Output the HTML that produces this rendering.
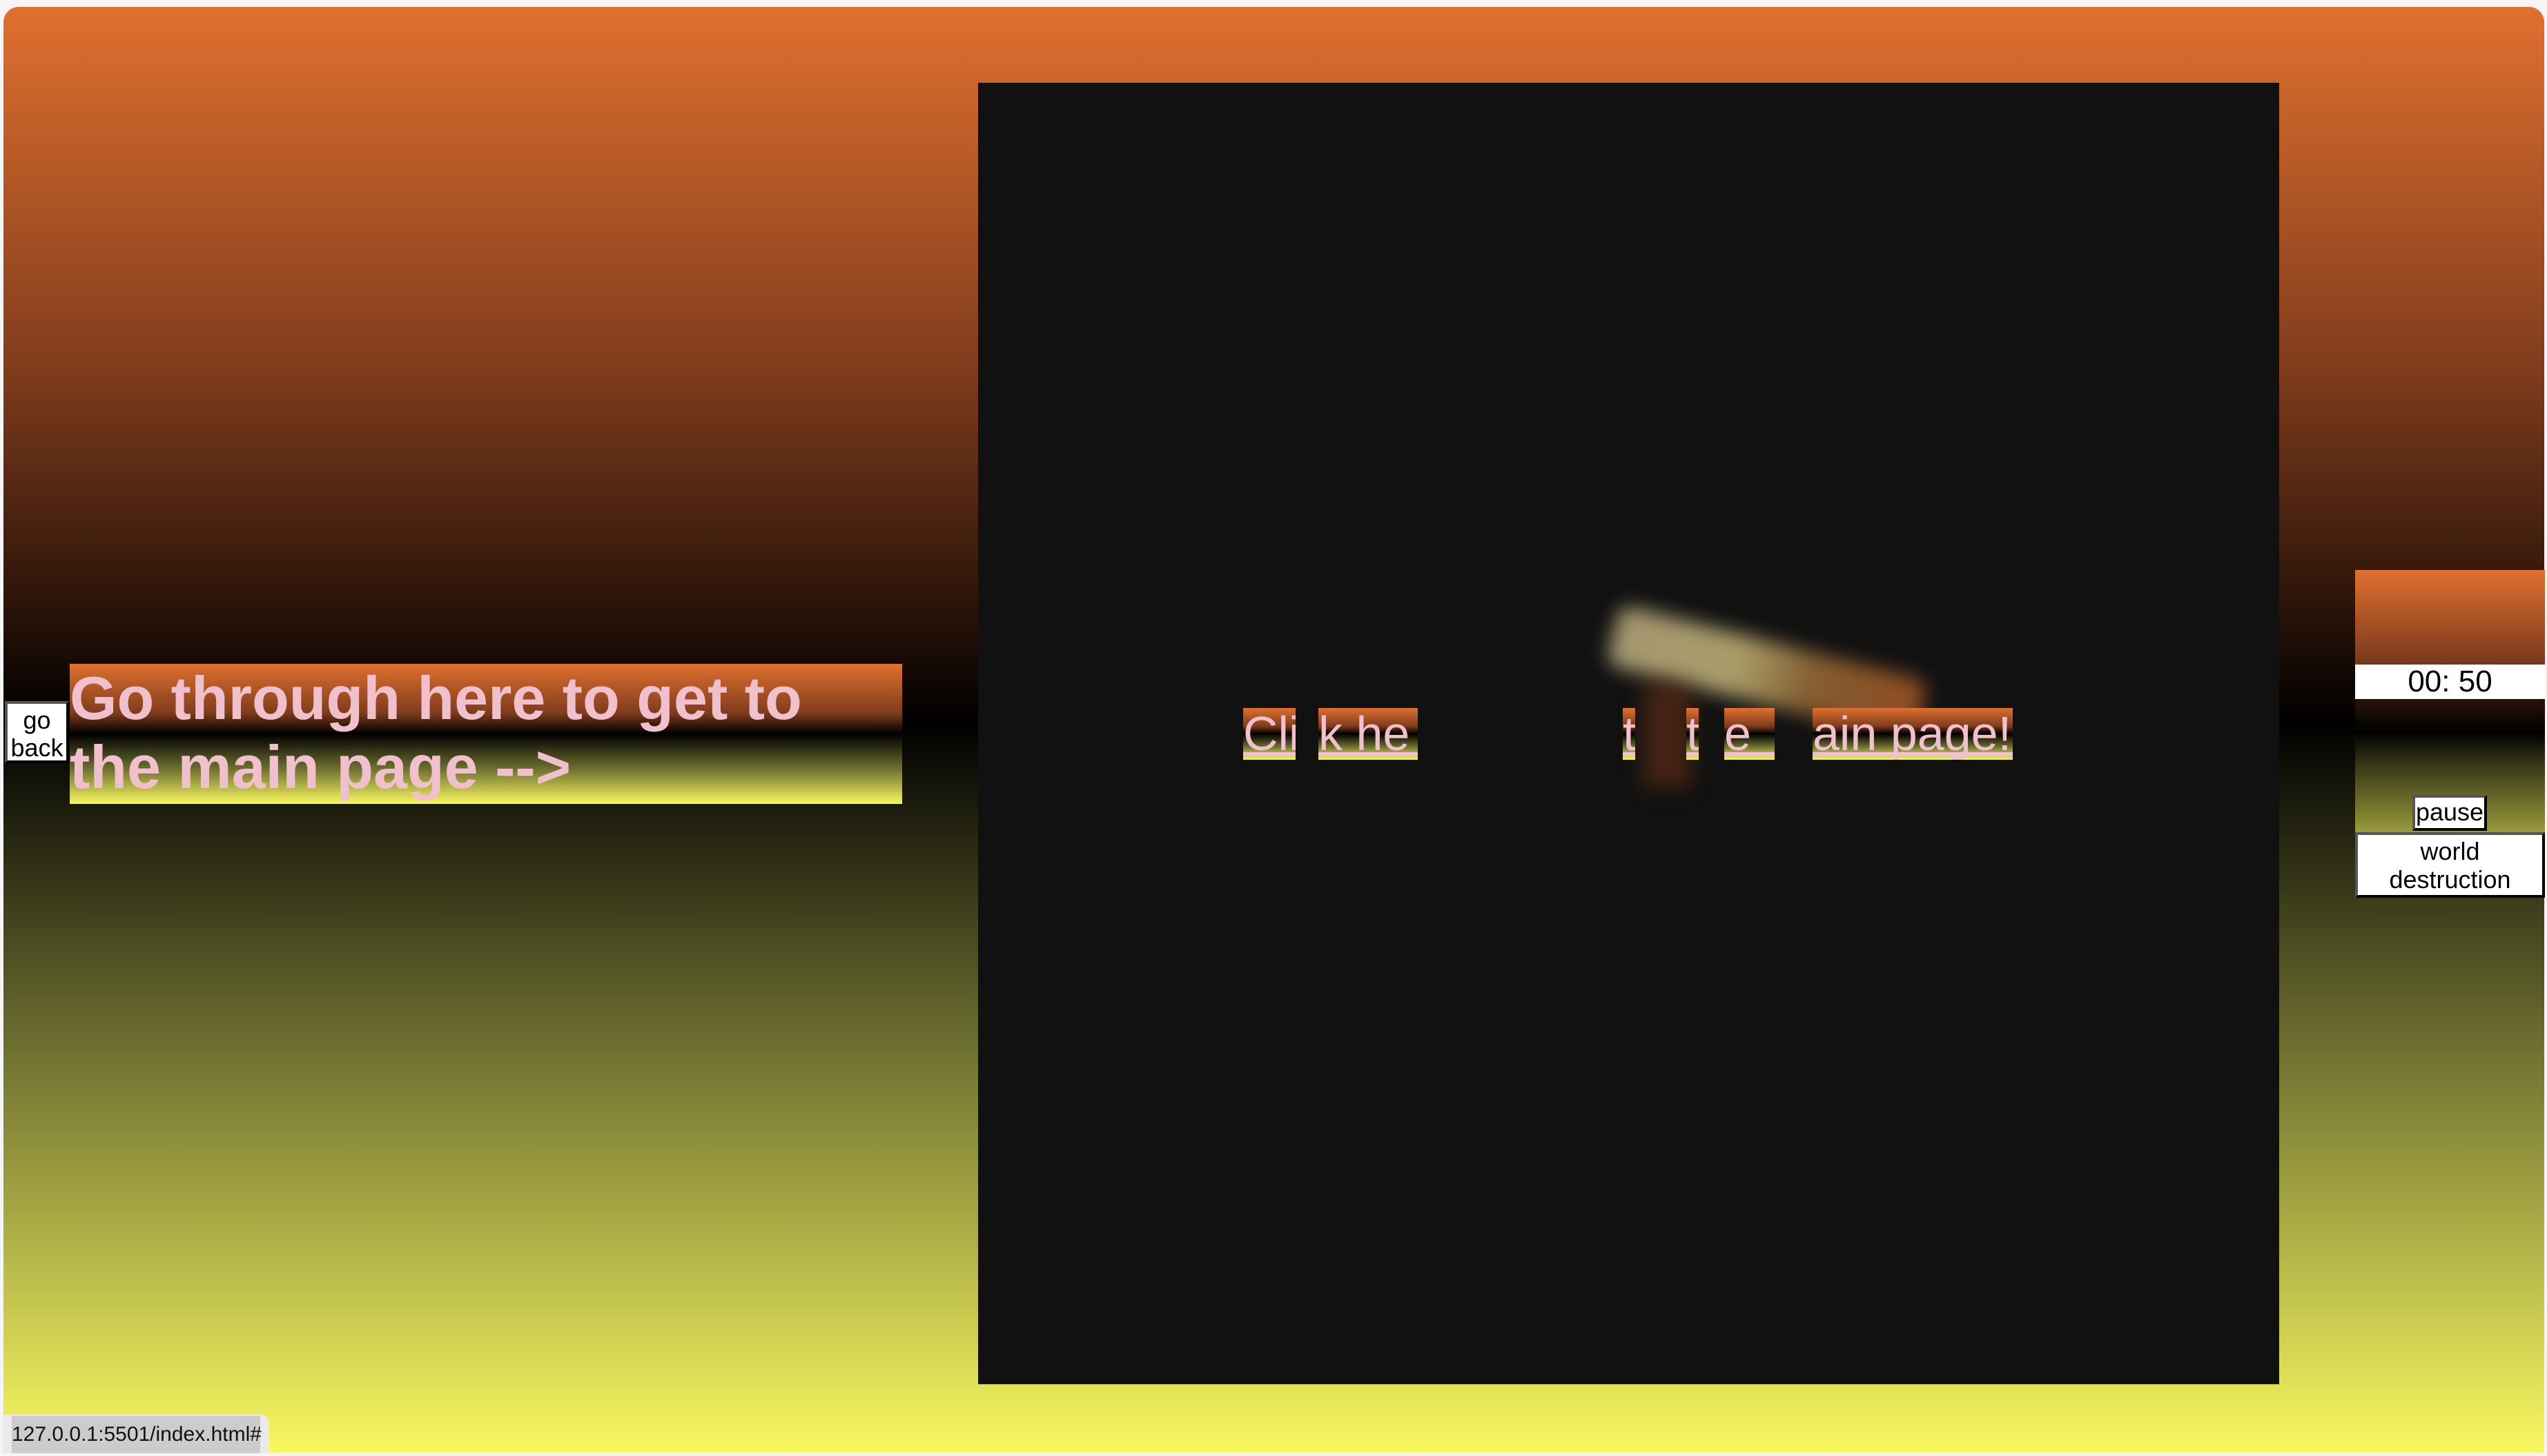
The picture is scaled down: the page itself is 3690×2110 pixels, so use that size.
<!DOCTYPE html>
<html><head><meta charset="utf-8"><style>
html,body{margin:0;padding:0;width:3690px;height:2110px;background:#f5f5f5;overflow:hidden;font-family:"Liberation Sans",Arial,sans-serif}
.page{position:absolute;left:5px;top:10px;width:3681px;height:2095px;border-radius:22px 22px 0 0;background:linear-gradient(#e07030 0%,#803c1c 25%,#000 49.5%,#1a1a0c 55%,#6e7030 72%,#f8f860 100%)}
.g{background:linear-gradient(#e07030,#803c1c 35%,#000 50%,#6e7030 75%,#f8f860)}
.a{position:absolute}
.sq{left:1417px;top:120px;width:1885px;height:1886px;background:#111}
.go{left:101px;top:962px;width:1206px;height:203px;color:#f0c0cc;font-weight:bold;font-size:88px;line-height:100px;white-space:nowrap}
.btn{background:#fff;border:4px solid;border-color:#555 #000 #000 #555;box-sizing:border-box;color:#000;text-align:center}
.sp{top:1026px;height:75px;color:#f0c0cc;font-size:70px;line-height:72px;white-space:pre;overflow:hidden}
.sp span{display:inline-block;transform-origin:0 0;position:relative;top:1px}
.sp:after{content:"";position:absolute;left:0;right:0;top:64px;height:6px;background:#f0c0cc}
</style></head><body>
<div class="page"></div>
<div class="a sq"></div>
<div class="a" style="left:2330px;top:930px;width:460px;height:90px;transform:rotate(14deg);filter:blur(14px);background:linear-gradient(90deg,#c8b888,#d0c080 40%,#a07038 65%,#b05a28);opacity:.8;border-radius:20px"></div>
<div class="a" style="left:2380px;top:990px;width:70px;height:150px;filter:blur(16px);background:#6a3016;opacity:.6"></div>
<div class="a go g">Go through here to get to<br>the main page --&gt;</div>
<div class="a btn" style="left:7px;top:1016px;width:93px;height:90px;font-size:36px;line-height:40px;padding-top:4px">go<br>back</div>
<div class="a sp g" style="left:1801px;width:76px"><span>Cli</span></div>
<div class="a sp g" style="left:1910px;width:144px"><span>k he</span></div>
<div class="a sp g" style="left:2351px;width:18px"><span>t</span></div>
<div class="a sp g" style="left:2443px;width:18px"><span>t</span></div>
<div class="a sp g" style="left:2498px;width:73px"><span>e </span></div>
<div class="a sp g" style="left:2626px;width:290px"><span>ain page!</span></div>
<div class="a" style="left:3412px;top:826px;width:275px;height:380px;background:linear-gradient(#e07030,#7a3a1c 35%,#341a0c 45%,#000 62%,#3a3a18 75%,#9a9a3c 100%)"></div>
<div class="a" style="left:3412px;top:963px;width:275px;height:50px;background:#fff;text-align:center;font-size:44px;line-height:50px">00: 50</div>
<div class="a btn" style="left:3495px;top:1152px;width:108px;height:52px;font-size:36px;line-height:42px">pause</div>
<div class="a btn" style="left:3412px;top:1206px;width:275px;height:95px;font-size:36px;line-height:41px;padding-top:3px">world<br>destruction</div>
<div class="a" style="left:4px;top:2050px;width:386px;height:56px;background:#eaeaea;border-radius:0 14px 0 0"></div>
<div class="a" style="left:17px;top:2052px;width:360px;height:54px;background:#ccc;font-size:30px;line-height:54px;color:#111;white-space:nowrap">127.0.0.1:5501/index.html#</div>
</body></html>
